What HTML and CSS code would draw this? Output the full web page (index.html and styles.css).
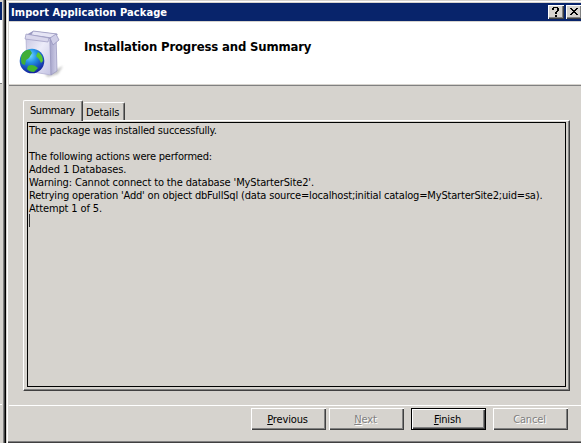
FILE: index.html
```html
<!DOCTYPE html>
<html lang="en">
<head>
<meta charset="utf-8">
<title>Import Application Package</title>
<link rel="stylesheet" href="styles.css">
</head>
<body>
<div class="desktop">
  <div class="behind"><div class="behind-title"></div><div class="behind-head"></div><div class="behind-body"></div></div>
  <main class="dialog">
    <div class="titlebar">
      <span class="caption">Import Application Package</span>
      <span class="cap-btn"><svg width="16" height="14" shape-rendering="crispEdges"><path d="M5 2h5v1H5zM4 3h2v2H4zM9 3h2v3H9zM8 6h2v1H8zM7 7h2v2H7zM7 10h2v2H7z"/></svg></span>
      <span class="cap-btn"><svg width="16" height="14" shape-rendering="crispEdges"><path d="M4 3h2v1H4zM10 3h2v1h-2zM5 4h2v1H5zM9 4h2v1H9zM6 5h4v1H6zM7 6h2v1H7zM6 7h4v1H6zM5 8h2v1H5zM9 8h2v1H9zM4 9h2v1H4zM10 9h2v1h-2z"/></svg></span>
    </div>
    <header class="header">
      <svg class="pkg" width="48" height="50" viewBox="0 0 48 50">
        <defs>
          <linearGradient id="front" x1="0" y1="0" x2="1" y2="1"><stop offset="0" stop-color="#c8c6e2"/><stop offset=".45" stop-color="#ececf9"/><stop offset="1" stop-color="#c4c3e3"/></linearGradient>
          <linearGradient id="side" x1="0" x2="1"><stop offset="0" stop-color="#a5a4ca"/><stop offset="1" stop-color="#d0cfe8"/></linearGradient>
          <radialGradient id="globe" cx=".42" cy=".28" r=".72"><stop offset="0" stop-color="#74dcff"/><stop offset=".4" stop-color="#238fe5"/><stop offset="1" stop-color="#12209c"/></radialGradient>
          <filter id="soft"><feGaussianBlur stdDeviation="1.3"/></filter>
        </defs>
        <path d="M26 45L44 36L39 44L29 47z" fill="#999" opacity=".55" filter="url(#soft)"/>
        <path d="M7 5L14 1L39 4L32 11z" fill="#9897c0"/>
        <path d="M14 1L38 4L33 8L12 5z" fill="#e6e5f5" stroke="#9a99bf" stroke-width=".8"/>
        <path d="M7 6L31 9L32 45L8 41z" fill="url(#front)" stroke="#b0afd2" stroke-width=".8"/>
        <path d="M31 10L37 5L38 41L32 45z" fill="url(#side)" stroke="#9a99c0" stroke-width=".8"/>
        <path d="M7 4L30 8L29 12L6 9z" fill="#d9d7ec" stroke="#9c9bc1" stroke-width=".7"/>
        <path d="M31 8L37 4L40 10L34 15z" fill="#cfcee7" stroke="#9291ba" stroke-width=".7"/>
        <circle cx="13" cy="31" r="12.3" fill="url(#globe)"/>
        <path d="M3 24Q7 19 11 20L13 23L10 28L7 30L6 35L3 34Q1 29 3 24z" fill="#3fae38"/>
        <path d="M9 36Q14 33 19 38L15 42Q10 42 8 39z" fill="#43b62e"/>
        <path d="M19 22Q24 25 24 31L22 33L20 29L17 26z" fill="#58c832"/>
      </svg>
      <h1>Installation Progress and Summary</h1>
    </header>
    <section class="content">
      <div class="tabs">
        <div class="tab active"><span class="t-sum">Summary</span></div>
        <div class="tab"><span class="t-det">Details</span></div>
      </div>
      <div class="panel">
        <div class="log">
          <p><span class="l1">The package was installed successfully.</span></p>
          <p>&nbsp;</p>
          <p><span class="l1">The following actions were performed:</span></p>
          <p><span class="l3">Added 1 Databases.</span></p>
          <p><span class="l3">Warning: Cannot connect to the database 'MyStarterSite2'.</span></p>
          <p><span class="l5">Retrying operation 'Add' on object dbFullSql (data source=localhost;initial catalog=MyStarterSite2;uid=sa).</span></p>
          <p><span class="l3">Attempt 1 of 5.</span></p>
          <div class="caret"></div>
        </div>
      </div>
    </section>
    <footer class="footer">
      <div class="btn"><span><u>P</u>revious</span></div>
      <div class="btn disabled"><span><u>N</u>ext</span></div>
      <div class="btn default"><span><u>F</u>inish</span></div>
      <div class="btn disabled"><span>Cancel</span></div>
    </footer>
  </main>
</div>
</body>
</html>
```
FILE: styles.css
```css
* { box-sizing: border-box; }
body { margin: 0; background: #d6d3ce; color: #000; font: 11px/13px "DejaVu Sans Condensed", "DejaVu Sans", sans-serif; font-stretch: condensed; overflow: hidden; }
.desktop { display: flex; width: 581px; height: 443px; }
.behind { width: 6px; border-right: 1px solid #000; box-shadow: inset -1px 0 #404040, inset -2px 0 #808080; padding-top: 2px; flex: none; }
.behind-title { width: 2px; height: 18px; background: #08246b; }
.behind-head { width: 2px; height: 64px; background: #fff; border-bottom: 1px solid #808080; }
.behind-body { width: 2px; height: 321px; border-bottom: 1px solid #fff; }
.dialog { flex: none; width: 575px; height: 443px; padding: 3px 0 0 3px; display: flex; flex-direction: column; box-shadow: inset 1px 1px #d6d3ce, inset 2px 2px #fff, inset 0 -1px #404040, inset 0 -2px #808080; }
.titlebar { height: 18px; background: #08246b; color: #fff; display: flex; align-items: center; padding-left: 2px; flex: none; }
.caption { flex: 1; font-weight: bold; white-space: nowrap; letter-spacing: .08px; }
.cap-btn { width: 16px; height: 14px; background: #d6d3ce; margin-right: 2px; box-shadow: inset 1px 1px #fff, inset -1px -1px #404040, inset -2px -2px #808080; flex: none; }
.cap-btn:last-child { margin-right: -1px; }
.cap-btn svg { display: block; }
.header { margin-top: 1px; height: 64px; background: #fff; border-bottom: 1px solid #808080; box-shadow: inset 0 -1px #d6d3ce; display: flex; flex: none; }
.pkg { margin: 8px 0 0 10px; flex: none; }
h1 { margin: 17px 0 0 17px; font-size: 13px; line-height: 16px; font-weight: bold; white-space: nowrap; letter-spacing: -.16px; }
.content { padding: 14px 0 0 14px; height: 305px; flex: none; }
.tabs { display: flex; align-items: flex-end; height: 20px; }
.tab { height: 18px; width: 42px; border-top: 1px solid #fff; border-right: 1px solid #404040; box-shadow: inset -1px 0 #808080; border-radius: 2px 2px 0 0; padding: 3px 0 0 3px; white-space: nowrap; letter-spacing: -.15px; }
.tab.active { width: 60px; height: 21px; margin-bottom: -1px; border-left: 1px solid #fff; background: #d6d3ce; padding: 3px 0 0 6px; z-index: 1; letter-spacing: -.45px; }
.panel { width: 547px; height: 271px; border: 1px solid #fff; border-right-color: #404040; border-bottom-color: #404040; box-shadow: inset -1px -1px #808080; padding: 1px 3px 3px 3px; }
.log { height: 265px; width: 539px; border: 1px solid #000; padding: 1px 0 0 1px; }
.log p { margin: 0; height: 13px; white-space: nowrap; }
.l1 { letter-spacing: -.2px; }
.l3 { letter-spacing: -.13px; }
.l5 { letter-spacing: -.18px; }
.caret { width: 1px; height: 13px; margin-top: -1px; background: #303030; }
.footer { margin-top: 14px; height: 26px; border-top: 1px solid #fff; padding: 2px 0 0 242px; display: flex; flex: none; }
.btn { width: 75px; height: 22px; margin-right: 3px; padding-right: 2px; letter-spacing: -.15px; box-shadow: inset 1px 1px #fff, inset -1px -1px #404040, inset -2px -2px #808080; display: flex; align-items: center; justify-content: center; }
.btn:nth-child(2), .btn:nth-child(3) { margin-right: 7px; }
.default { box-shadow: inset 0 0 0 1px #000, inset 2px 2px #fff, inset -2px -2px #404040, inset -3px -3px #808080; }
.disabled { color: #808080; text-shadow: 1px 1px #fff; }
u { text-underline-offset: 1px; }
```
